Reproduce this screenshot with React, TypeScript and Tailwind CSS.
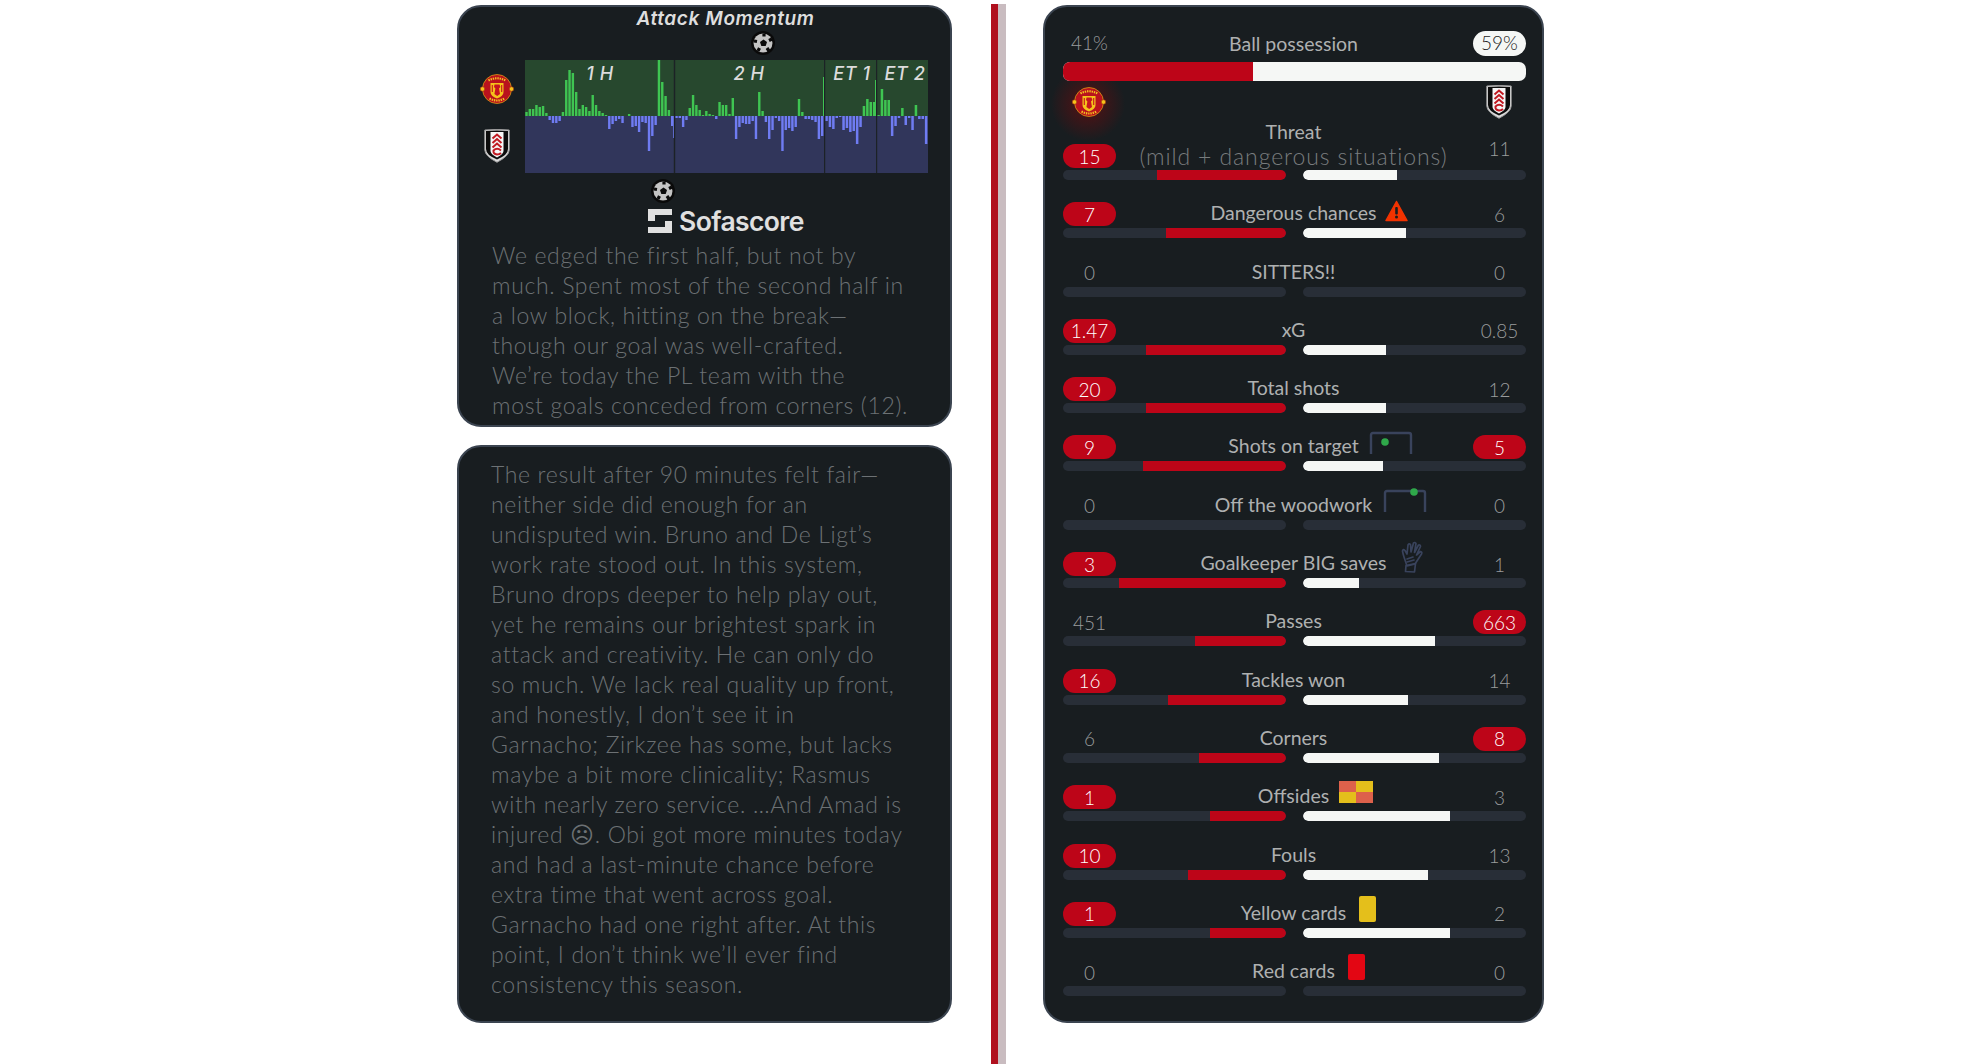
import React from "react";

const textFont = "font-['Lato','Noto_Sans',sans-serif]";

const SECTIONS: { x: number; w: number; d: number[] }[] = [
  { x: 0, w: 149, d: [4,7,7,11,9,10,3,-4,-7,-7,-5,4,36,46,43,24,7,11,9,5,21,11,5,3,1,-13,-8,-5,-3,-7,0,2,-11,-10,-16,-6,-7,-35,-20,-9,56,34,20,6,-10] },
  { x: 150, w: 149, d: [-2,-2,-11,-4,8,21,11,6,1,5,2,1,-3,14,11,11,2,18,-23,-11,-7,-8,-8,-5,-23,24,5,-6,-23,-14,-2,-5,-35,-14,-12,-15,-11,17,4,-3,-3,-4,-6,-23,-20] },
  { x: 300, w: 51, d: [-5,-11,-13,-2,-1,-14,-12,-16,-15,-28,-11,10,17,14,14] },
  { x: 352, w: 51, d: [1,27,16,16,-20,-10,-2,8,-9,-2,-14,11,-3,-3,-28] },
];

function MomentumChart() {
  return (
    <svg width="403" height="113" viewBox="0 0 403 113" className="block">
      <rect x="0" y="0" width="403" height="56" fill="#27482e" />
      <rect x="0" y="56" width="403" height="57" fill="#31365b" />
      {SECTIONS.map((s) => {
        const slot = s.w / s.d.length;
        return s.d.map((v, i) => (
          <rect
            key={`${s.x}-${i}`}
            x={s.x + i * slot + 0.3}
            y={v > 0 ? 56 - v : 56}
            width={slot - 0.9}
            height={Math.abs(v)}
            fill={v > 0 ? "#3fc552" : "#6f7cf2"}
          />
        ));
      })}
      <rect x="298" y="17" width="1.2" height="39" fill="#3fc552" />
      <rect x="350" y="20" width="1" height="36" fill="#3fc552" />
      <rect x="148" y="56" width="1" height="22" fill="#6f7cf2" />
      <rect x="148.8" y="0" width="1.4" height="113" fill="#1c2226" />
      <rect x="299" y="0" width="1.2" height="113" fill="#1c2226" />
      <rect x="351" y="0" width="1.2" height="113" fill="#1c2226" />
    </svg>
  );
}

function Ball({ className }: { className?: string }) {
  return (
    <svg width="24" height="24" viewBox="0 0 24 24" className={className}>
      <circle cx="12" cy="12" r="12" fill="#0a0a0a" />
      <circle cx="12" cy="12" r="9.500" fill="#c4c4c4" />
      <path d="M12.500 8.500l3.500 2.500-1.300 4H10.300L9 11z" fill="#0a0a0a" />
      <path d="M13 2.500v3M21 8l-3 1.500M18 20l-2-3M7 20l1.500-3M3 10l3 .5" stroke="#0a0a0a" strokeWidth="3.200" />
    </svg>
  );
}

function ManUtd({ size = 34 }: { size?: number }) {
  return (
    <svg width={size} height={size} viewBox="0 0 34 34" className="block">
      <circle cx="17" cy="17" r="14.500" fill="#b9121d" stroke="#d99a14" strokeWidth=".8" />
      <circle cx="2.500" cy="17" r="2.300" fill="#f5c21b" stroke="#9a2a10" strokeWidth=".6" />
      <circle cx="31.500" cy="17" r="2.300" fill="#f5c21b" stroke="#9a2a10" strokeWidth=".6" />
      <path d="M8.500 8.500Q17 4 25.500 8.500" stroke="#f3c21f" strokeWidth="2.200" strokeDasharray="1.400 .9" fill="none" />
      <path d="M9.500 26.500Q17 30.500 24.500 26.500" stroke="#f3c21f" strokeWidth="2.200" strokeDasharray="1.400 .9" fill="none" />
      <path d="M10.500 11H23.500V20Q23.500 24 17 26.500Q10.500 24 10.500 20z" fill="#f5c21b" />
      <path d="M14.500 12.500h5l.9 2.500-1.400 1.500 1 5.500-2.800 2-2.800-2 1-5.500-1.400-1.500z" fill="#c7141f" />
      <path d="M12.300 13v7M21.700 13v7" stroke="#c7141f" strokeWidth="1.100" />
    </svg>
  );
}

function Fulham({ w = 26, h = 34 }: { w?: number; h?: number }) {
  return (
    <svg width={w} height={h} viewBox="0 0 26 34" className="block">
      <path d="M.8 1Q13 -.2 25.200 1V21Q25.200 27 13 33.300Q.8 27 .8 21z" fill="#dcdcdc" stroke="#9b9b9b" strokeWidth="1" />
      <path d="M2 2Q13 1 24 2V20Q24 26 13 30.500Q2 26 2 20z" fill="#0c0c0c" />
      <path d="M6.500 3H19.500V22Q19.500 25 13 28.500Q6.500 25 6.500 22z" fill="#f6f6f6" />
      <g stroke="#c11a22" strokeWidth="2" fill="none">
        <path d="M8.500 9.500L13 5.500L17.500 9.500" />
        <path d="M8.500 14L13 10L17.500 14" />
        <path d="M8.500 18.500L13 14.500L17.500 18.500" />
        <path d="M17 21.500Q13 18 9.500 21.500Q9 25 13 25.500Q15.500 25.500 17 24" />
      </g>
    </svg>
  );
}

function Goal({ ballX, ballY }: { ballX: number; ballY: number }) {
  return (
    <svg width="44" height="24" viewBox="0 0 44 24" className="block overflow-visible">
      <path d="M2 23V4Q2 2 4 2H40Q42 2 42 4V23" fill="none" stroke="#39435c" strokeWidth="2.400" />
      <circle cx={ballX} cy={ballY} r="3.800" fill="#2fa84a" />
    </svg>
  );
}

function Warning() {
  return (
    <svg width="23" height="22" viewBox="0 0 23 22" className="block">
      <path d="M11.500 1.500L22 20.500H1z" fill="#f23300" stroke="#f23300" strokeWidth="1.500" strokeLinejoin="round" />
      <rect x="10.200" y="7" width="2.600" height="7.500" rx="1" fill="#181d20" />
      <circle cx="11.500" cy="17" r="1.500" fill="#181d20" />
    </svg>
  );
}

function Glove() {
  return (
    <svg width="22" height="32" viewBox="0 0 22 32" className="block">
      <g fill="none" stroke="#39435c" strokeWidth="1.700" strokeLinecap="round" strokeLinejoin="round">
        <path d="M6 25L3 16Q2 13 1.500 10Q2 7.500 4 9.500L6 13L7 4Q8 2 9.500 3.500L10 11L12.500 2Q14 .8 15 2.500L13.500 11.500L17.500 4Q19.500 3.500 19.500 5.500L15.500 14L19.500 10.500Q21.500 11 20.500 13L14 23z" />
        <path d="M5 24.500L14.500 22.500L13.500 31L4.500 30.500z" />
        <path d="M6 18L12 16M6 21L13 19" />
      </g>
    </svg>
  );
}

function OffsideFlag() {
  return (
    <div className="grid h-[22px] w-[34px] grid-cols-2 grid-rows-2">
      <div className="bg-[#dd614b]" />
      <div className="bg-[#e4bf1b]" />
      <div className="bg-[#e4bf1b]" />
      <div className="bg-[#dd614b]" />
    </div>
  );
}

type Stat = {
  left: string;
  right: string;
  label: string;
  l: number;
  r: number;
  win?: "left" | "right" | "both";
  icon?: React.ReactNode;
};

const STATS: Stat[] = [
  { left: "7", right: "6", label: "Dangerous chances", l: 54, r: 46, win: "left", icon: <div className="absolute left-full top-[-1px] ml-[8px]"><Warning /></div> },
  { left: "0", right: "0", label: "SITTERS!!", l: 0, r: 0 },
  { left: "1.47", right: "0.85", label: "xG", l: 63, r: 37, win: "left" },
  { left: "20", right: "12", label: "Total shots", l: 63, r: 37, win: "left" },
  { left: "9", right: "5", label: "Shots on target", l: 64, r: 36, win: "both", icon: <div className="absolute left-full top-[-3px] ml-[10px]"><Goal ballX={16} ballY={11} /></div> },
  { left: "0", right: "0", label: "Off the woodwork", l: 0, r: 0, icon: <div className="absolute left-full top-[-4px] ml-[11px]"><Goal ballX={31} ballY={3} /></div> },
  { left: "3", right: "1", label: "Goalkeeper BIG saves", l: 75, r: 25, win: "left", icon: <div className="absolute left-full top-[-10px] ml-[14px]"><Glove /></div> },
  { left: "451", right: "663", label: "Passes", l: 41, r: 59, win: "right" },
  { left: "16", right: "14", label: "Tackles won", l: 53, r: 47, win: "left" },
  { left: "6", right: "8", label: "Corners", l: 39, r: 61, win: "right" },
  { left: "1", right: "3", label: "Offsides", l: 34, r: 66, win: "left", icon: <div className="absolute left-full top-[-3px] ml-[10px]"><OffsideFlag /></div> },
  { left: "10", right: "13", label: "Fouls", l: 44, r: 56, win: "left" },
  { left: "1", right: "2", label: "Yellow cards", l: 34, r: 66, win: "left", icon: <div className="absolute left-full top-[-5px] ml-[13px] h-[26px] w-[17px] rounded-[2px] bg-[#e4bf1b]" /> },
  { left: "0", right: "0", label: "Red cards", l: 0, r: 0, icon: <div className="absolute left-full top-[-5px] ml-[13px] h-[26px] w-[17px] rounded-[2px] bg-[#e30613]" /> },
];

function Value({ v, pill, className = "" }: { v: string; pill: boolean; className?: string }) {
  return (
    <div
      className={`flex h-[24px] w-[53px] -translate-y-[1px] items-center justify-center rounded-full text-[19px] font-light leading-none ${
        pill ? "bg-[#bd0518] text-white" : "text-[#9a9c9d]"
      } ${className}`}
    >
      {v}
    </div>
  );
}

function Bars({ l, r }: { l: number; r: number }) {
  return (
    <div className="flex gap-[17px]">
      <div className="flex h-[10px] flex-1 justify-end overflow-hidden rounded-full bg-[#282e37]">
        <div className="h-full rounded-r-full bg-[#bd0518]" style={{ width: `${l}%` }} />
      </div>
      <div className="flex h-[10px] flex-1 overflow-hidden rounded-full bg-[#282e37]">
        <div className="h-full rounded-l-full bg-[#f5f7f5]" style={{ width: `${r}%` }} />
      </div>
    </div>
  );
}

function StatRow({ s }: { s: Stat }) {
  return (
    <div className="mt-[23.3px]">
      <div className="mb-[1px] grid grid-cols-[53px_1fr_53px] items-center">
        <Value v={s.left} pill={s.win === "left" || s.win === "both"} />
        <div className="flex -translate-y-[2px] justify-center pr-[2px] text-[19.5px] leading-[24px] text-[#aeb0b0]">
          <span className="relative whitespace-nowrap">
            {s.label}
            {s.icon}
          </span>
        </div>
        <Value v={s.right} pill={s.win === "right" || s.win === "both"} />
      </div>
      <Bars l={s.l} r={s.r} />
    </div>
  );
}

const P1 = [
  "We edged the first half, but not by",
  "much. Spent most of the second half in",
  "a low block, hitting on the break—",
  "though our goal was well-crafted.",
  "We’re today the PL team with the",
  "most goals conceded from corners (12).",
];

const P2 = [
  "The result after 90 minutes felt fair—",
  "neither side did enough for an",
  "undisputed win. Bruno and De Ligt’s",
  "work rate stood out. In this system,",
  "Bruno drops deeper to help play out,",
  "yet he remains our brightest spark in",
  "attack and creativity. He can only do",
  "so much. We lack real quality up front,",
  "and honestly, I don’t see it in",
  "Garnacho; Zirkzee has some, but lacks",
  "maybe a bit more clinicality; Rasmus",
  "with nearly zero service. …And Amad is",
  "injured ☹. Obi got more minutes today",
  "and had a last-minute chance before",
  "extra time that went across goal.",
  "Garnacho had one right after. At this",
  "point, I don’t think we’ll ever find",
  "consistency this season.",
];

function Paragraph({ lines }: { lines: string[] }) {
  return (
    <div className="whitespace-nowrap font-['Lato','DejaVu_Sans',sans-serif] text-[23px] font-light leading-[30px] tracking-[0.65px] text-[#6c7174]">
      {lines.map((l) => (
        <div key={l}>{l}</div>
      ))}
    </div>
  );
}

export default function App() {
  return (
    <div className={`flex h-screen overflow-hidden bg-white pl-[457px] ${textFont}`}>
      <div className="mt-[5px] flex w-[495px] shrink-0 flex-col gap-[18px]">
        <section className="h-[422px] rounded-[24px] border-2 border-[#3b4450] bg-[#181d20]">
          <div className="h-[53px] pl-[42px] pt-[1px] text-center font-['Inter',sans-serif] text-[19px] font-semibold italic leading-[22px] tracking-[0.6px] text-[#dedede]">
            Attack Momentum
          </div>
          <div className="flex">
            <div className="ml-[14px] flex w-[48px] flex-col items-center pt-[12px]">
              <ManUtd />
              <div className="mt-[23px]"><Fulham /></div>
            </div>
            <div className="relative ml-[4px] h-[113px] w-[403px]">
              <MomentumChart />
              <Ball className="absolute left-[226px] top-[-29px]" />
              <Ball className="absolute left-[126px] top-[119px]" />
              {[
                ["1 H", "left-[75px]"],
                ["2 H", "left-[224px]"],
                ["ET 1", "left-[327px]"],
                ["ET 2", "left-[380px]"],
              ].map(([t, c]) => (
                <span
                  key={t}
                  className={`absolute top-[3px] -translate-x-1/2 whitespace-nowrap font-['Inter',sans-serif] text-[18px] font-medium italic leading-[22px] tracking-[0.6px] text-[#dcdcdc] ${c}`}
                >
                  {t}
                </span>
              ))}
            </div>
          </div>
          <div className="ml-[189px] mt-[36px] flex h-[24px] items-center gap-[7px]">
            <svg width="24" height="24" viewBox="0 0 24 24" className="block">
              <path d="M0 0H24V6H7V12H0zM24 24H0V18H17V12H24z" fill="#e0e0e0" />
            </svg>
            <span className="font-['Inter',sans-serif] text-[26.5px] font-semibold leading-none tracking-[-0.6px] text-[#e0e0e0]">
              Sofascore
            </span>
          </div>
          <div className="ml-[33px] mt-[7px]">
            <Paragraph lines={P1} />
          </div>
        </section>
        <section className="h-[578px] rounded-[24px] border-2 border-[#3b4450] bg-[#181d20] pl-[32px] pt-[12px]">
          <Paragraph lines={P2} />
        </section>
      </div>

      <div className="ml-[39px] mt-[-1px] flex shrink-0 pt-[5px]">
        <div className="w-[7px] bg-[#b0101e]" />
        <div className="w-[8px] bg-[#c9bcc0]" />
      </div>

      <section className="ml-[37px] mt-[5px] h-[1018px] w-[501px] shrink-0 rounded-[24px] border-2 border-[#3b4450] bg-[#181d20] pl-[18px] pr-[16px] pt-[24px]">
        <div className="grid grid-cols-[53px_1fr_53px] items-center">
          <div className="flex h-[25px] items-center justify-center text-[19px] font-light text-[#9a9c9d]">41%</div>
          <div className="pr-[2px] text-center text-[19.5px] leading-[25px] text-[#aeb0b0]">Ball possession</div>
          <div className="flex h-[25px] items-center justify-center rounded-full bg-[#f5f7f5] text-[19px] font-light text-[#222]">59%</div>
        </div>
        <div className="relative z-10 mt-[6px] flex h-[19px] overflow-hidden rounded-[7px] bg-[#f5f7f5]">
          <div className="h-full w-[41%] bg-[#bd0518]" />
        </div>
        <div className="relative flex h-[40px] items-center justify-between pl-[9px] pr-[14px] pt-[2px]">
          <div className="absolute left-[-12px] top-[-14px] h-[74px] w-[74px] bg-[radial-gradient(circle_closest-side,#46151a_0%,#3e1518_40%,#181d2000_100%)]" />
          <div className="relative"><ManUtd /></div>
          <Fulham />
        </div>
        <div className="mt-[24px]">
          <div className="mb-[1px] grid grid-cols-[53px_1fr_53px] items-center">
            <Value v="15" pill />
            <div className="relative -translate-y-[1px] pr-[2px] text-center text-[23px] font-light leading-[24px] tracking-[0.9px] text-[#787c7e]">
              <div className="absolute inset-x-0 top-[-24px] pr-[2px] text-[19.5px] font-normal tracking-normal text-[#aeb0b0]">Threat</div>
              <span className="whitespace-nowrap">(mild + dangerous situations)</span>
            </div>
            <Value v="11" pill={false} className="-translate-y-[9px]" />
          </div>
          <Bars l={58} r={42} />
        </div>
        {STATS.map((s) => (
          <StatRow key={s.label} s={s} />
        ))}
      </section>
    </div>
  );
}
